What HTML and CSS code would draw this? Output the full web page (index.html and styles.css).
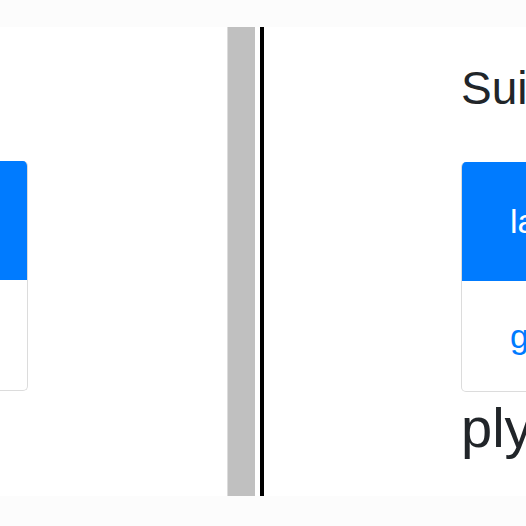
FILE: index.html
```html
<!DOCTYPE html>
<html>
<head>
<meta charset="utf-8">
<link rel="stylesheet" href="styles.css">
</head>
<body>
<div class="page">
  <div class="strip"></div>
  <div class="main">
    <div class="col-left">
      <div class="card card-left">
        <div class="card-head"></div>
        <div class="card-body"></div>
      </div>
    </div>
    <div class="divider"></div>
    <div class="gap"></div>
    <div class="rule"></div>
    <div class="col-right">
      <div class="title">Suite</div>
      <div class="card card-right">
        <div class="card-head"><span>latest</span></div>
        <div class="card-body"><span>github</span></div>
      </div>
      <div class="big">plyr</div>
    </div>
  </div>
  <div class="strip"></div>
</div>
</body>
</html>
```
FILE: styles.css
```css
html, body {
  margin: 0;
  padding: 0;
  background: #fff;
}
.page {
  width: 526px;
  height: 526px;
  overflow: hidden;
  display: flex;
  flex-direction: column;
  font-family: "Liberation Sans", Arial, sans-serif;
  color: #212529;
}
.strip {
  height: 27px;
  flex: none;
  background: #fcfcfc;
}
.strip:last-child {
  height: 30px;
}
.main {
  flex: 1;
  display: flex;
  min-height: 0;
}
.col-left {
  width: 227px;
  flex: none;
  overflow: hidden;
}
.divider {
  width: 27px;
  flex: none;
  background: #c0c0c0;
  border-left: 1px solid #dcdcdc;
}
.gap {
  width: 5px;
  flex: none;
}
.rule {
  width: 4px;
  flex: none;
  background: #000;
}
.col-right {
  flex: 1;
  min-width: 0;
  overflow: hidden;
  padding-left: 197px;
}
.card {
  border: 1px solid #dcdcdc;
  border-top: none;
  border-radius: 5px;
  overflow: hidden;
  background: #fff;
}
.card-head {
  height: 119px;
  background: #007bff;
  color: #fff;
  display: flex;
  align-items: center;
}
.card-body {
  height: 110px;
  color: #007bff;
  display: flex;
  align-items: center;
}
.card-head span, .card-body span {
  font-size: 34px;
  padding-left: 48px;
  white-space: nowrap;
}
.card-left {
  width: 140px;
  margin-left: -114px;
  margin-top: 134px;
}
.card-right {
  width: 200px;
  margin-top: 46px;
}
.title {
  font-size: 46px;
  line-height: 1.2;
  margin-top: 34px;
  white-space: nowrap;
}
.big {
  font-size: 56px;
  line-height: 1.2;
  margin-top: 2px;
  white-space: nowrap;
}
```
